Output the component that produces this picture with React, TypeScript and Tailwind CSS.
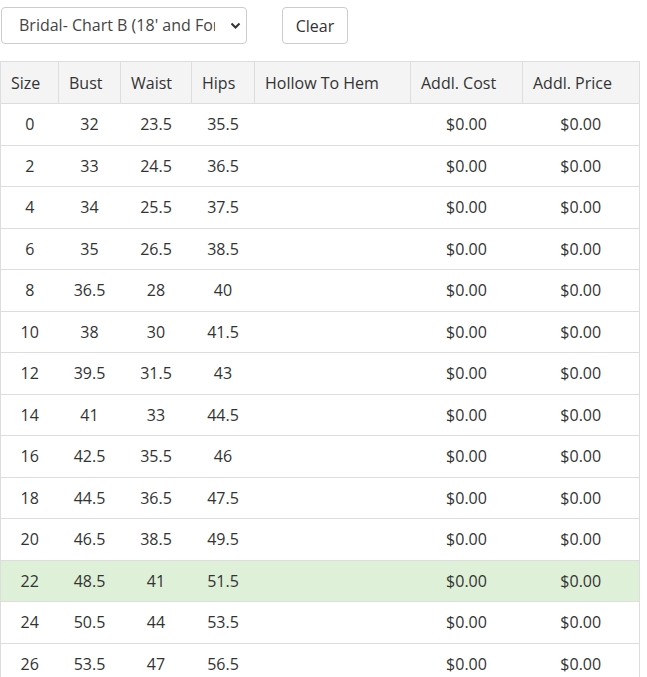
import React from "react";

const rows = [
  ["0", "32", "23.5", "35.5"],
  ["2", "33", "24.5", "36.5"],
  ["4", "34", "25.5", "37.5"],
  ["6", "35", "26.5", "38.5"],
  ["8", "36.5", "28", "40"],
  ["10", "38", "30", "41.5"],
  ["12", "39.5", "31.5", "43"],
  ["14", "41", "33", "44.5"],
  ["16", "42.5", "35.5", "46"],
  ["18", "44.5", "36.5", "47.5"],
  ["20", "46.5", "38.5", "49.5"],
  ["22", "48.5", "41", "51.5"],
  ["24", "50.5", "44", "53.5"],
  ["26", "53.5", "47", "56.5"],
];

const headers = [
  { label: "Size", w: "w-[58px]" },
  { label: "Bust", w: "w-[62px]" },
  { label: "Waist", w: "w-[71px]" },
  { label: "Hips", w: "w-[63px]" },
  { label: "Hollow To Hem", w: "w-[156px]" },
  { label: "Addl. Cost", w: "w-[112px]" },
  { label: "Addl. Price", w: "w-[117px]" },
];

export default function App() {
  return (
    <div className="min-h-screen bg-white text-[#333] font-['Open_Sans',sans-serif] text-[16px]">
      {/* barre de filtres */}
      <div className="flex items-center gap-[35px] pt-[7px] pl-[1px]">
        <div className="relative w-[246px] h-[37px] border border-[#ccc] rounded-[4px] bg-white">
          <div className="ml-[17px] w-[196px] leading-[35px] whitespace-nowrap overflow-hidden text-[#444]">
            Bridal- Chart B (18' and For
          </div>
          <svg className="absolute right-[5px] top-[14px]" width="11" height="8" viewBox="0 0 11 8">
            <path d="M1.5 1.5 L5.5 5.5 L9.5 1.5" fill="none" stroke="#333" strokeWidth="2" />
          </svg>
        </div>
        <button className="w-[66px] h-[37px] border border-[#ccc] rounded-[4px] bg-white text-[#333]">
          Clear
        </button>
      </div>

      {/* tableau des tailles */}
      <table className="mt-[17px] w-[640px] border-collapse table-fixed border border-[#ddd]">
        <thead>
          <tr className="bg-[#f4f4f4] h-[42px]">
            {headers.map((h) => (
              <th key={h.label} className={`${h.w} border border-[#ddd] px-[10px] text-left font-normal`}>
                {h.label}
              </th>
            ))}
          </tr>
        </thead>
        <tbody>
          {rows.map((r) => (
            <tr key={r[0]} className={`h-[41.5px] ${r[0] === "22" ? "bg-[#dff0d8]" : ""}`}>
              {r.map((v, i) => (
                <td key={i} className="border-t border-[#ddd] text-center">
                  {v}
                </td>
              ))}
              <td className="border-t border-[#ddd]"></td>
              <td className="border-t border-[#ddd] text-center">$0.00</td>
              <td className="border-t border-[#ddd] text-center">$0.00</td>
            </tr>
          ))}
        </tbody>
      </table>
    </div>
  );
}
